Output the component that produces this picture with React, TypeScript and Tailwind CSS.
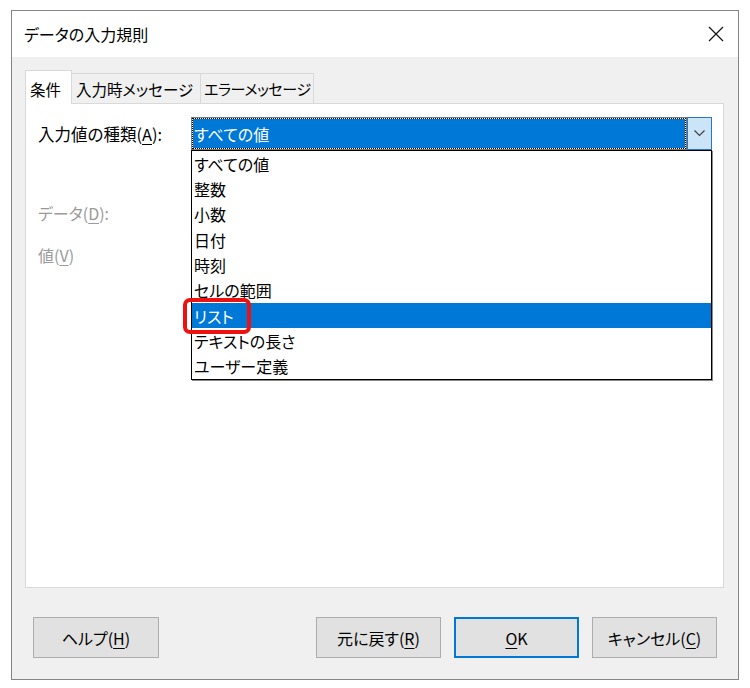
import React from "react"
import { clsx } from "clsx"

const items = [
  "すべての値",
  "整数",
  "小数",
  "日付",
  "時刻",
  "セルの範囲",
  "リスト",
  "テキストの長さ",
  "ユーザー定義",
]

function Key({ k }: { k: string }) {
  return <span className="underline underline-offset-[3px] decoration-1">{k}</span>
}

function DialogButton({
  children,
  primary,
  className,
}: {
  children: React.ReactNode
  primary?: boolean
  className?: string
}) {
  return (
    <button
      className={clsx(
        "flex h-[41px] w-[125px] items-center justify-center bg-[#e1e1e1] text-[16px] leading-[24px] text-black",
        primary ? "border-2 border-[#0078d7]" : "border border-[#adadad]",
        className
      )}
    >
      {children}
    </button>
  )
}

function ComboBox() {
  return (
    <div className="relative h-[33px] w-[521px]">
      <div className="flex h-full">
        <div className="flex-1 border border-[#7a7a7a] bg-white">
          <div className="flex h-full items-center border border-dotted border-black bg-[#0078d7] bg-clip-padding pl-[1px] text-[16px] leading-[24px] text-white">
            すべての値
          </div>
        </div>
        <div className="flex w-[25px] items-center justify-center border border-[#2a74c4] bg-[#cce4f7]">
          <svg width="11" height="7" viewBox="0 0 11 7" fill="none">
            <polyline points="0.5,0.5 5.5,5.5 10.5,0.5" stroke="#404040" strokeWidth="1.2" />
          </svg>
        </div>
      </div>

      {/* open list */}
      <div className="absolute left-0 top-[33px] z-20 w-[521px] border border-black bg-white shadow-[1px_1px_0_#8a8a8a]">
        {items.map((item, i) => (
          <div
            key={item}
            className={clsx(
              "flex h-[25.33px] items-center pl-[2px] text-[16px] leading-[24px]",
              i === 6 ? "bg-[#0078d7] text-white" : "text-black"
            )}
          >
            {item}
          </div>
        ))}
        {/* annotation around リスト */}
        <div className="absolute left-[-9px] top-[147px] h-[36px] w-[68px] rounded-[7px] border-4 border-[#ee1111]" />
      </div>
    </div>
  )
}

export default function App() {
  return (
    <div className="h-[688px] w-[750px] bg-white pl-[11px] pt-[10px] font-['Noto_Sans_CJK_JP','Noto_Sans',sans-serif] text-black [font-feature-settings:'palt']">
      <div className="flex h-[670px] w-[728px] flex-col border border-[#858585]">
        {/* title bar */}
        <div className="flex h-[46px] items-center justify-between bg-white pl-[12px] pr-[14px]">
          <span className="text-[16px] leading-[24px]">データの入力規則</span>
          <svg width="16" height="16" viewBox="0 0 16 16" fill="none">
            <path d="M1 1L15 15M15 1L1 15" stroke="#111" strokeWidth="1.2" />
          </svg>
        </div>

        {/* body */}
        <div className="flex flex-1 flex-col bg-[#f0f0f0] px-[13px] pt-[13px]">
          {/* tabs */}
          <div className="flex h-[33px] items-end whitespace-nowrap text-[15.5px] leading-[24px]">
            <div className="relative z-10 mb-[-1px] flex h-[34px] w-[47px] items-start border border-b-0 border-[#d9d9d9] bg-white pl-[4px] pt-[6px]">
              条件
            </div>
            <div className="flex h-[30px] w-[129px] items-start border-r border-t border-[#d9d9d9] pl-[4px] pt-[3px]">
              入力時メッセージ
            </div>
            <div className="flex h-[30px] w-[113px] items-start border-r border-t border-[#d9d9d9] pl-[3px] pt-[3px] text-[15px] tracking-[-0.4px]">
              エラーメッセージ
            </div>
          </div>

          {/* panel */}
          <div className="h-[485px] w-[699px] border border-[#d9d9d9] bg-white pl-[12px] pt-[13px]">
            <div className="flex items-center">
              <div className="w-[153px] whitespace-nowrap text-[16.5px] leading-[24px]">
                入力値の種類(<Key k="A" />):
              </div>
              <ComboBox />
            </div>
            <div className="mt-[51px] text-[16px] leading-[24px] text-[#9a9a9a]">
              データ(<Key k="D" />):
            </div>
            <div className="mt-[18px] text-[16px] leading-[24px] text-[#9a9a9a]">
              値(<Key k="V" />)
            </div>
          </div>

          {/* buttons */}
          <div className="mt-[29px] flex px-[8px]">
            <DialogButton className="w-[126px]">
              ヘルプ(<Key k="H" />)
            </DialogButton>
            <div className="ml-auto flex gap-[13px]">
              <DialogButton>
                元に戻す(<Key k="R" />)
              </DialogButton>
              <DialogButton primary>
                <Key k="O" />K
              </DialogButton>
              <DialogButton>
                キャンセル(<Key k="C" />)
              </DialogButton>
            </div>
          </div>
        </div>
      </div>
    </div>
  )
}
